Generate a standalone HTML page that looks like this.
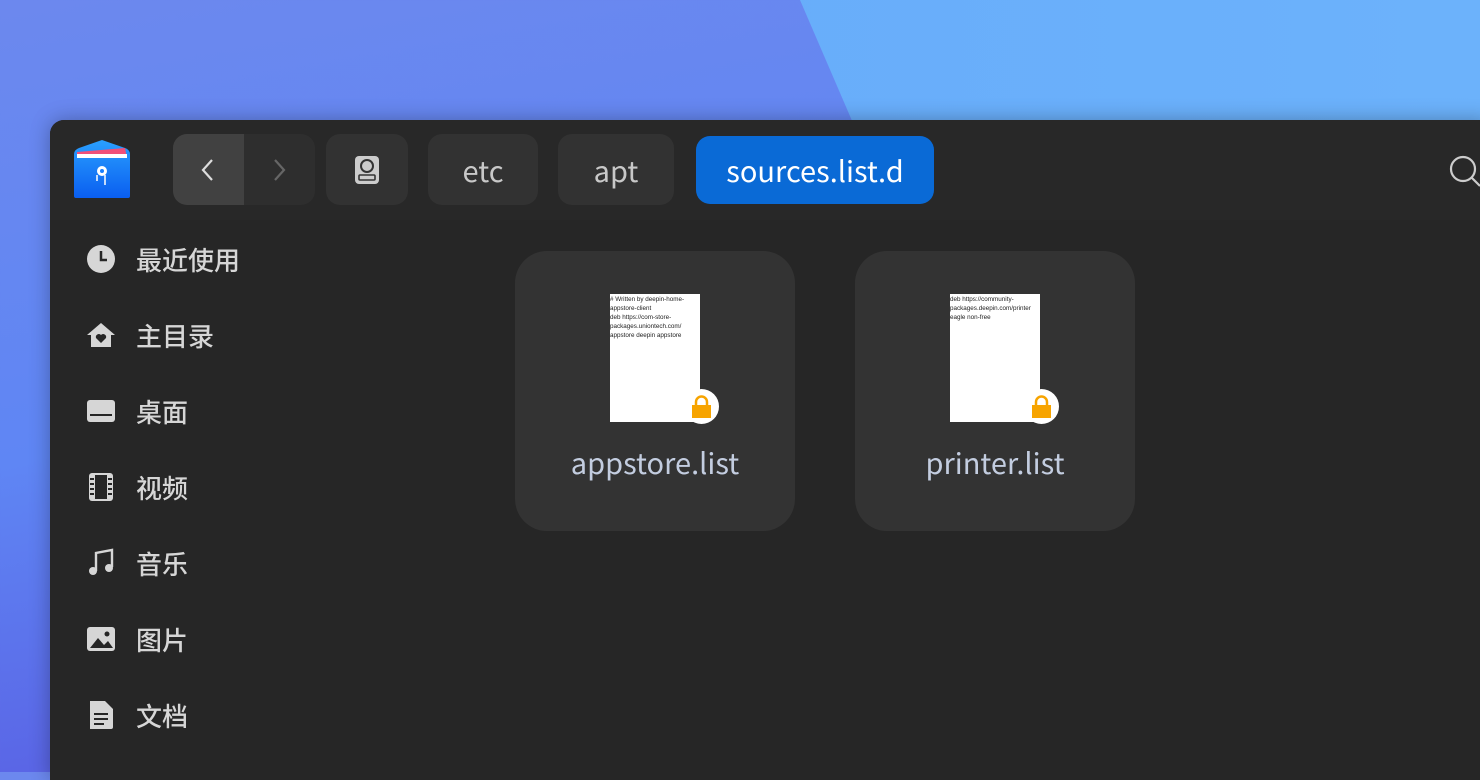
<!DOCTYPE html>
<html><head><meta charset="utf-8"><style>
*{margin:0;padding:0;box-sizing:border-box}
body{width:1480px;height:772px;overflow:hidden;position:relative;font-family:"Noto Sans CJK SC","Liberation Sans",sans-serif;
background:linear-gradient(170deg,#6c88ee 0%,#5f86f4 45%,#5a66e6 75%,#8050e0 100%)}
.lite{position:absolute;left:0;top:0;width:1480px;height:130px;background:linear-gradient(90deg,#64a8fa,#6cb2fb);clip-path:polygon(800px 0,1480px 0,1480px 130px,856px 130px)}
.win{position:absolute;left:50px;top:120px;width:1440px;height:660px;background:#262626;border-radius:14px 0 0 0;overflow:hidden;box-shadow:0 0 20px rgba(0,0,0,.3)}
.hdr{position:absolute;left:0;top:0;right:0;height:100px;background:#282828}
.btn{position:absolute;top:14px;height:71px;background:#323232;border-radius:14px;color:#c8c8c8;font-size:29px;display:flex;align-items:center;justify-content:center}
.side{position:absolute;left:36px;color:#d6d6d6;font-size:26px;font-weight:500;display:flex;align-items:center;height:40px}
.side svg{width:30px;height:30px;margin-right:20px}
.card{position:absolute;top:131px;width:280px;height:280px;background:#333;border-radius:32px}
.doc{position:absolute;left:95px;top:43px;width:90px;height:128px;background:#fff;font-family:"Liberation Sans",sans-serif;font-size:6.3px;line-height:9px;color:#222;padding-top:1px;overflow:hidden}
.lock{position:absolute;left:169px;top:138px;width:35px;height:35px;border-radius:50%;background:#fff}
.name{position:absolute;left:0;right:0;top:190px;text-align:center;color:#c3cde0;font-size:29px}
</style></head><body>
<div class="lite"></div>
<div class="win">
<div class="hdr"></div>
<svg style="position:absolute;left:23px;top:20px" width="58" height="60" viewBox="0 0 58 60"><defs><linearGradient id="g" x1="0" y1="0" x2="0" y2="1"><stop offset="0" stop-color="#2aa0ff"/><stop offset="1" stop-color="#0a5ef0"/></linearGradient></defs><path d="M1 14 Q1 10 6 8 L29 0 L52 8 Q57 10 57 14 V56 a2 2 0 0 1 -2 2 H3 a2 2 0 0 1 -2 -2Z" fill="url(#g)"/><path d="M4 12 L52 8 L54 18 H4Z" fill="#f0507a"/><path d="M4 14 H54 V18 H4Z" fill="#fff"/><circle cx="29" cy="31" r="5" fill="#fff"/><circle cx="29" cy="31" r="2" fill="#1a80ff"/><path d="M24 35v6M32 35v10" stroke="#fff" stroke-width="1.5"/></svg>
<div class="btn" style="left:123px;width:142px;background:#2e2e2e"><div style="position:absolute;left:0;top:0;width:71px;height:71px;background:#414141;border-radius:14px 0 0 14px"></div>
<svg style="position:absolute;left:26px;top:24px" width="20" height="24"><path d="M13 2L4 12l9 10" stroke="#ddd" stroke-width="2.2" fill="none"/></svg>
<svg style="position:absolute;left:98px;top:24px" width="20" height="24"><path d="M4 2l9 10-9 10" stroke="#666" stroke-width="2.2" fill="none"/></svg></div>
<div class="btn" style="left:276px;width:82px"><svg width="26" height="30" viewBox="0 0 26 30"><rect x="1" y="1" width="24" height="28" rx="4" fill="#ccc"/><circle cx="13" cy="11" r="6" fill="none" stroke="#333" stroke-width="2"/><rect x="5" y="20" width="16" height="5" rx="1" fill="none" stroke="#333" stroke-width="1.6"/></svg></div>
<div class="btn" style="left:378px;width:110px">etc</div>
<div class="btn" style="left:508px;width:116px">apt</div>
<div class="btn" style="left:646px;width:238px;top:16px;height:68px;background:#0a6ad6;color:#fff">sources.list.d</div>
<svg style="position:absolute;left:1396px;top:34px" width="40" height="34"><circle cx="17" cy="15" r="12" stroke="#ccc" stroke-width="2.2" fill="none"/><path d="M26 24l8 8" stroke="#ccc" stroke-width="2.2"/></svg>

<div class="side" style="top:119px"><svg viewBox="0 0 30 30"><circle cx="15" cy="15" r="14" fill="#d6d6d6"/><path d="M15 7v9h6" stroke="#262626" stroke-width="2.5" fill="none"/></svg>最近使用</div>
<div class="side" style="top:195px"><svg viewBox="0 0 30 30"><path d="M15 3L1 15h4v12h20V15h4z" fill="#d6d6d6"/><path d="M15 23l-5-5a3 3 0 0 1 5-3a3 3 0 0 1 5 3z" fill="#262626"/></svg>主目录</div>
<div class="side" style="top:271px"><svg viewBox="0 0 30 30"><rect x="1" y="4" width="28" height="22" rx="3" fill="#d6d6d6"/><rect x="4" y="18" width="22" height="2" fill="#262626"/></svg>桌面</div>
<div class="side" style="top:347px"><svg viewBox="0 0 30 30"><rect x="3" y="1" width="24" height="28" rx="3" fill="#d6d6d6"/><rect x="9" y="3" width="12" height="24" fill="#262626"/><path d="M4 7h4M4 12h4M4 17h4M4 22h4M22 7h4M22 12h4M22 17h4M22 22h4" stroke="#262626" stroke-width="2"/></svg>视频</div>
<div class="side" style="top:423px"><svg viewBox="0 0 30 30"><path d="M10 23V5l16-3v17" stroke="#d6d6d6" stroke-width="2.4" fill="none"/><circle cx="7" cy="23" r="4" fill="#d6d6d6"/><circle cx="23" cy="20" r="4" fill="#d6d6d6"/></svg>音乐</div>
<div class="side" style="top:499px"><svg viewBox="0 0 30 30"><rect x="1" y="3" width="28" height="24" rx="3" fill="#d6d6d6"/><path d="M4 24l8-10 6 7 4-4 5 7z" fill="#262626"/><circle cx="21" cy="10" r="2.5" fill="#262626"/></svg>图片</div>
<div class="side" style="top:575px"><svg viewBox="0 0 30 30"><path d="M4 1h15l8 8v18a2 2 0 0 1-2 2H4z" fill="#d6d6d6"/><path d="M8 14h14M8 19h14M8 24h10" stroke="#262626" stroke-width="2"/></svg>文档</div>

<div class="card" style="left:465px"><div class="doc"># Written by deepin-home-<br>appstore-client<br>deb https://com-store-<br>packages.uniontech.com/<br>appstore deepin appstore</div>
<div class="lock"><svg width="35" height="35"><path d="M12 17v-4a5.5 5.5 0 0 1 11 0v4" stroke="#f7a400" stroke-width="2.5" fill="none"/><rect x="8" y="16" width="19" height="13" fill="#f7a400"/></svg></div><div class="name">appstore.list</div></div>
<div class="card" style="left:805px"><div class="doc">deb https://community-<br>packages.deepin.com/printer<br>eagle non-free</div>
<div class="lock"><svg width="35" height="35"><path d="M12 17v-4a5.5 5.5 0 0 1 11 0v4" stroke="#f7a400" stroke-width="2.5" fill="none"/><rect x="8" y="16" width="19" height="13" fill="#f7a400"/></svg></div><div class="name">printer.list</div></div>
</div>
</body></html>
